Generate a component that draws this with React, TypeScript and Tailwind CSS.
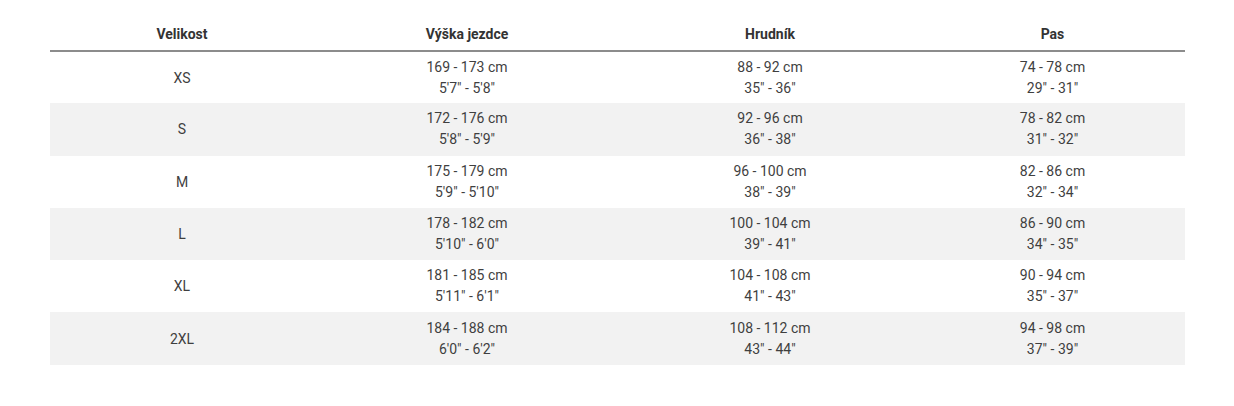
const rows = [
  { size: 'XS', height: ['169 - 173 cm', '5\'7" - 5\'8"'], chest: ['88 - 92 cm', '35" - 36"'], waist: ['74 - 78 cm', '29" - 31"'] },
  { size: 'S', height: ['172 - 176 cm', '5\'8" - 5\'9"'], chest: ['92 - 96 cm', '36" - 38"'], waist: ['78 - 82 cm', '31" - 32"'] },
  { size: 'M', height: ['175 - 179 cm', '5\'9" - 5\'10"'], chest: ['96 - 100 cm', '38" - 39"'], waist: ['82 - 86 cm', '32" - 34"'] },
  { size: 'L', height: ['178 - 182 cm', '5\'10" - 6\'0"'], chest: ['100 - 104 cm', '39" - 41"'], waist: ['86 - 90 cm', '34" - 35"'] },
  { size: 'XL', height: ['181 - 185 cm', '5\'11" - 6\'1"'], chest: ['104 - 108 cm', '41" - 43"'], waist: ['90 - 94 cm', '35" - 37"'] },
  { size: '2XL', height: ['184 - 188 cm', '6\'0" - 6\'2"'], chest: ['108 - 112 cm', '43" - 44"'], waist: ['94 - 98 cm', '37" - 39"'] },
]

function TwoLine({ lines }: { lines: string[] }) {
  return (
    <td className="p-0 text-center align-middle">
      {lines.map((l) => (
        <div key={l} className="leading-[21px]">{l}</div>
      ))}
    </td>
  )
}

export default function App() {
  return (
    <div className="min-h-[406px] bg-white pt-[16px] font-['Roboto',sans-serif] text-[14px] text-[#3f3f3f]">
      <table className="ml-[50px] w-[1135px] table-fixed border-collapse">
        <colgroup>
          <col className="w-[264px]" />
          <col className="w-[306px]" />
          <col className="w-[300px]" />
          <col className="w-[265px]" />
        </colgroup>
        <thead>
          <tr className="h-[35px] border-b-2 border-[#8c8c8c]">
            {['Velikost', 'Výška jezdce', 'Hrudník', 'Pas'].map((h) => (
              <th key={h} className="p-0 pt-[2px] text-center align-middle font-bold text-[#333]">
                {h}
              </th>
            ))}
          </tr>
        </thead>
        <tbody>
          {rows.map((r, i) => (
            <tr key={r.size} className={`h-[52.3px] ${i % 2 === 1 ? 'bg-[#f2f2f2]' : 'bg-white'}`}>
              <td className="p-0 pt-[1px] text-center align-middle">{r.size}</td>
              <TwoLine lines={r.height} />
              <TwoLine lines={r.chest} />
              <TwoLine lines={r.waist} />
            </tr>
          ))}
        </tbody>
      </table>
    </div>
  )
}
